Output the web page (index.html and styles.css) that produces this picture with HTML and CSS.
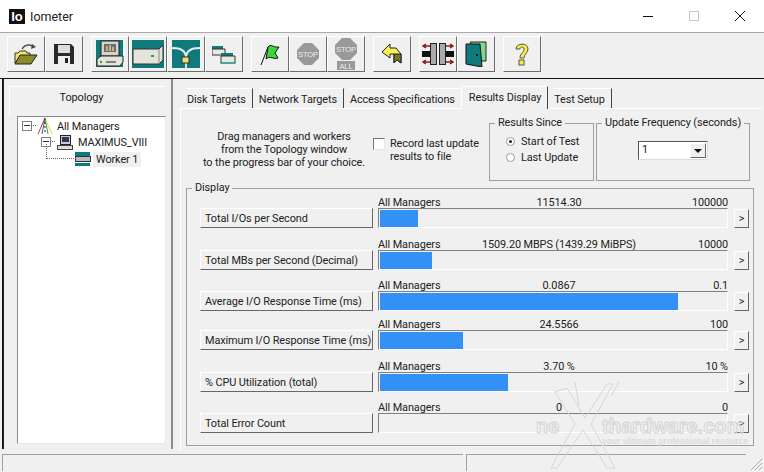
FILE: index.html
```html
<!DOCTYPE html>
<html lang="en">
<head>
    <meta charset="UTF-8">
    <title>Iometer</title>
    <link rel="stylesheet" href="styles.css">
</head>
<body>
    <header class="titlebar">
        <div class="app-logo">Io</div>
        <div class="app-name">Iometer</div>
        <div class="win-controls">
            <svg class="win-btn" width="12" height="12" viewBox="0 0 12 12"><path d="M1 6.5h10" stroke="#111" fill="none"/></svg>
            <svg class="win-btn" width="12" height="12" viewBox="0 0 12 12"><rect x="1.5" y="1.5" width="9" height="9" stroke="#c8c8c8" fill="none"/></svg>
            <svg class="win-btn" width="12" height="12" viewBox="0 0 12 12"><path d="M1 1l10 10M11 1L1 11" stroke="#111" fill="none"/></svg>
        </div>
    </header>

    <div class="toolbar">
        <div class="tool-group">
            <div class="tool"><svg width="24" height="22" viewBox="0 0 24 22"><path d="M8 6c3-5 9-5 12-2" stroke="#555" stroke-width="1.5" fill="none"/><path d="M18 1l4 3-5 2z" fill="#444"/><path d="M1 10h3l2-2h6l1 2h3v3H6L1 20z" fill="#f5e36a" stroke="#333"/><path d="M6 12h17l-6 9H1z" fill="#8b8b2a" stroke="#222"/></svg></div>
            <div class="tool"><svg width="20" height="20" viewBox="0 0 20 20"><path d="M0 0h17l3 3v17H0z" fill="#2a2a2a"/><rect x="4" y="1" width="12" height="8" fill="#ddd"/><rect x="4" y="12" width="12" height="8" fill="#eee"/><rect x="11" y="14" width="3" height="5" fill="#222"/></svg></div>
        </div>
        <div class="tool-group">
            <div class="tool"><svg width="28" height="28" viewBox="0 0 28 28"><rect width="27" height="27" fill="#0f7a7c"/><rect x="5" y="1" width="18" height="15" fill="#d8d4c4" stroke="#222"/><rect x="8" y="4" width="12" height="8" fill="#6a6a8a"/><path d="M11 11V6M14 11V5M17 11V7" stroke="#e8d050" stroke-width="1.5"/><path d="M1 19l4-3h22v6l-3 4H1z" fill="#e4e4dc" stroke="#222"/><path d="M10 22h10" stroke="#222"/><rect x="4" y="21" width="2" height="2" fill="#2a9a4a"/></svg></div>
            <div class="tool"><svg width="32" height="28" viewBox="0 0 32 28"><rect width="32" height="28" fill="#0f7a7c"/><path d="M1 9h26l4-4v15l-4 4H1z" fill="#e4e4dc" stroke="#333"/><path d="M27 9v15" stroke="#888"/><rect x="19" y="15" width="3" height="2" fill="#2a9a4a"/></svg></div>
            <div class="tool"><svg width="32" height="28" viewBox="0 0 32 28"><rect width="28" height="28" x="2" fill="#0f7a7c"/><path d="M0 8c7 0 14 0 16 8 2-8 9-8 16-8" stroke="#eee" stroke-width="2" fill="none"/><path d="M16 16v12" stroke="#ddd" stroke-width="2"/><rect x="12" y="17" width="7" height="6" fill="#f0e070" stroke="#333"/></svg></div>
            <div class="tool"><svg width="24" height="20" viewBox="0 0 24 20"><path d="M0 2h11v3H0z" fill="#0f7a7c"/><path d="M0 5h13v6H0z" fill="#e8e8e0" stroke="#333"/><path d="M9 9h12v3H9z" fill="#0f7a7c"/><path d="M9 12h14v7H9z" fill="#e8e8e0" stroke="#333"/><path d="M8 19h16" stroke="#0fb0b0"/></svg></div>
        </div>
        <div class="tool-group">
            <div class="tool"><svg width="20" height="24" viewBox="0 0 20 24"><path d="M1 23L8 5" stroke="#111" fill="none"/><path d="M8 5c3-4 5 1 11 0l-4 6 3 5c-5 2-7-3-12 1z" fill="#39d83a" stroke="#111"/></svg></div>
            <div class="tool"><svg width="22" height="22" viewBox="0 0 22 22"><path d="M7 0h8l7 7v8l-7 7H7l-7-7V7z" fill="#999"/><text class="stop-text" x="11" y="14" text-anchor="middle">STOP</text></svg></div>
            <div class="tool"><svg width="22" height="32" viewBox="0 0 22 32"><path d="M7 0h8l7 7v8l-7 7H7l-7-7V7z" fill="#999"/><text class="stop-text" x="11" y="14" text-anchor="middle">STOP</text><rect x="2" y="23" width="18" height="9" fill="#999"/><text class="stop-text" x="11" y="31" text-anchor="middle">ALL</text></svg></div>
        </div>
        <div class="tool-group">
            <div class="tool"><svg width="20" height="20" viewBox="0 0 20 20"><path d="M0 8L8 0v4h6l5 6v9l-4-3-3 3v-9H8v4z" fill="#f7ee5a" stroke="#222"/><path d="M12 10h7v9l-4-3-3 3z" fill="#75752a" stroke="#222"/></svg></div>
        </div>
        <div class="tool-group">
            <div class="tool"><svg width="32" height="24" viewBox="0 0 32 24"><path d="M0 9h9v6H0zM23 9h9v6h-9z" fill="#111"/><rect x="8.5" y="1.5" width="6" height="21" fill="#aaa" stroke="#222"/><rect x="17.5" y="1.5" width="6" height="21" fill="#aaa" stroke="#222"/><path d="M8 4H2M4 2L1 4l3 2M8 20H2M4 18l-3 2 3 2M24 4h6M28 2l3 2-3 2M24 20h6M28 18l3 2-3 2" stroke="#8a1c1c" fill="none" stroke-width="1.5"/></svg></div>
            <div class="tool"><svg width="22" height="26" viewBox="0 0 22 26"><path d="M5 1h16v19H17z" fill="#7ed98a" stroke="#222"/><path d="M1 3l14 0 2 23-16-3z" fill="#0f7a7c" stroke="#111"/><rect x="11" y="13" width="2" height="2" fill="#111"/></svg></div>
        </div>
        <div class="tool-group">
            <div class="tool"><svg width="14" height="24" viewBox="0 0 14 24"><path d="M1 7C1 1 13 0 13 7c0 4-4 5-4 9H5c0-5 4-5 4-9 0-3-4-2-4 0z" fill="#f7ee40" stroke="#555"/><rect x="4" y="18" width="5" height="5" fill="#f7ee40" stroke="#555"/></svg></div>
        </div>
    </div>

    <main class="workspace">
        <aside class="topology">
            <div class="topology-title">Topology</div>
            <div class="tree">
                <div class="tree-row">
                    <span class="expander"></span>
                    <svg class="tree-icon" width="18" height="16" viewBox="0 0 18 16"><path d="M9 0L2 16" stroke="#c33" fill="none"/><path d="M9 0l-3 16" stroke="#44b" fill="none"/><path d="M9 0l3 16" stroke="#3a3" fill="none"/><path d="M9 0l7 16" stroke="#dd4" fill="none"/><path d="M9 0v16" stroke="#222" stroke-dasharray="2 2" fill="none"/></svg>
                    <span>All Managers</span>
                </div>
                <div class="tree-row level-1">
                    <span class="expander"></span>
                    <svg class="tree-icon" width="16" height="15" viewBox="0 0 16 15"><rect x="3.5" y="0.5" width="10" height="9" fill="#ccc" stroke="#222"/><rect x="5" y="2" width="7" height="5" fill="#336"/><rect x="0.5" y="10.5" width="15" height="4" fill="#ddd" stroke="#444"/></svg>
                    <span>MAXIMUS_VIII</span>
                </div>
                <div class="tree-row level-2">
                    <svg class="tree-icon" width="16" height="14" viewBox="0 0 16 14"><rect width="15" height="4" fill="#0f7a7c"/><rect x="0.5" y="4.5" width="15" height="5" fill="#bbb" stroke="#333"/><rect y="11" width="15" height="3" fill="#0f7a7c"/></svg>
                    <span class="tree-selected">Worker 1</span>
                </div>
            </div>
        </aside>

        <section class="results">
            <nav class="tabs">
                <div class="tab">Disk Targets</div>
                <div class="tab">Network Targets</div>
                <div class="tab plain">Access Specifications</div>
                <div class="tab active">Results Display</div>
                <div class="tab">Test Setup</div>
            </nav>
            <div class="tab-panel">
                <div class="options">
                    <p class="hint">Drag managers and workers<br>from the Topology window<br>to the progress bar of your choice.</p>
                    <div class="record">
                        <span class="checkbox"></span>
                        <span>Record last update<br>results to file</span>
                    </div>
                    <fieldset class="group since">
                        <legend>Results Since</legend>
                        <div class="radio-row"><span class="radio checked"></span>Start of Test</div>
                        <div class="radio-row"><span class="radio"></span>Last Update</div>
                    </fieldset>
                    <fieldset class="group frequency">
                        <legend>Update Frequency (seconds)</legend>
                        <div class="combo">
                            <span>1</span>
                            <span class="combo-btn"></span>
                        </div>
                    </fieldset>
                </div>

                <fieldset class="group display">
                    <legend>Display</legend>
                    <div class="meter-row">
                        <div class="meter-labels"><span>All Managers</span><span class="center">11514.30</span><span class="right">100000</span></div>
                        <button class="stat-btn">Total I/Os per Second</button>
                        <div class="meter"><div class="fill" style="width: 38px"></div></div>
                        <button class="more-btn">&gt;</button>
                    </div>
                    <div class="meter-row">
                        <div class="meter-labels"><span>All Managers</span><span class="center">1509.20 MBPS (1439.29 MiBPS)</span><span class="right">10000</span></div>
                        <button class="stat-btn">Total MBs per Second (Decimal)</button>
                        <div class="meter"><div class="fill" style="width: 52px"></div></div>
                        <button class="more-btn">&gt;</button>
                    </div>
                    <div class="meter-row">
                        <div class="meter-labels"><span>All Managers</span><span class="center">0.0867</span><span class="right">0.1</span></div>
                        <button class="stat-btn">Average I/O Response Time (ms)</button>
                        <div class="meter"><div class="fill" style="width: 298px"></div></div>
                        <button class="more-btn">&gt;</button>
                    </div>
                    <div class="meter-row">
                        <div class="meter-labels"><span>All Managers</span><span class="center">24.5566</span><span class="right">100</span></div>
                        <button class="stat-btn">Maximum I/O Response Time (ms)</button>
                        <div class="meter"><div class="fill" style="width: 83px"></div></div>
                        <button class="more-btn">&gt;</button>
                    </div>
                    <div class="meter-row">
                        <div class="meter-labels"><span>All Managers</span><span class="center">3.70 %</span><span class="right">10 %</span></div>
                        <button class="stat-btn">% CPU Utilization (total)</button>
                        <div class="meter"><div class="fill" style="width: 128px"></div></div>
                        <button class="more-btn">&gt;</button>
                    </div>
                    <div class="meter-row">
                        <div class="meter-labels"><span>All Managers</span><span class="center">0</span><span class="right">0</span></div>
                        <button class="stat-btn">Total Error Count</button>
                        <div class="meter"></div>
                        <button class="more-btn">&gt;</button>
                    </div>
                </fieldset>
            </div>
        </section>
    </main>

    <footer class="statusbar">
        <div class="status-pane wide"></div>
        <div class="status-pane"></div>
        <svg class="grip" width="14" height="14" viewBox="0 0 14 14"><path d="M13 2L2 13M13 6l-7 7M13 10l-3 3" stroke="#aaa" fill="none"/></svg>
    </footer>

    <div class="watermark">
        <svg class="wm-logo" width="80" height="92" viewBox="0 0 80 92"><path d="M10 12l20 32L6 88h6l26-38 24 38h8L46 44 68 4h-6L40 38 22 8zM30 2l4 24M74 2l-8 14" fill="none" stroke="#d6d6d6"/></svg>
        <span class="wm-ne">ne</span>
        <span class="wm-host">thardware.com</span>
        <span class="wm-tag">your ultimate professional resource</span>
    </div>
</body>
</html>
```

FILE: styles.css
```css
* {
    box-sizing: border-box;
}

html, body {
    height: 100%;
}

body {
    margin: 0;
    width: 764px;
    height: 472px;
    overflow: hidden;
    position: relative;
    display: flex;
    flex-direction: column;
    background: #f0f0f0;
    color: #222;
    font-family: Roboto, 'Liberation Sans', Arial, sans-serif;
    font-size: 10.9px;
    letter-spacing: -0.1px;
}

/* title bar */
.titlebar {
    height: 33px;
    flex: none;
    display: flex;
    align-items: center;
    background: #fff;
    border-bottom: 1px solid #a8a8a8;
    padding-left: 9px;
}

.app-logo {
    width: 16px;
    height: 15px;
    background: #111;
    color: #fff;
    font-family: 'Liberation Sans', Arial, sans-serif;
    font-size: 13px;
    font-weight: 700;
    line-height: 15px;
    text-align: center;
}

.app-name {
    margin-left: 5px;
    font-size: 12.5px;
    letter-spacing: 0;
}

.win-controls {
    margin-left: auto;
    margin-right: 18px;
    display: flex;
    gap: 34px;
}

/* toolbar */
.toolbar {
    height: 46px;
    flex: none;
    display: flex;
    gap: 8px;
    padding: 3px 0 0 7px;
    border-bottom: 1px solid #111;
}

.tool-group {
    display: flex;
}

.tool {
    width: 38px;
    height: 36px;
    display: flex;
    align-items: center;
    justify-content: center;
    border: 1px solid;
    border-color: #fff #6e6e6e #6e6e6e #fff;
}

.stop-text {
    font-size: 7.5px;
    fill: #eee;
    font-family: 'Liberation Sans', Arial, sans-serif;
}

/* main area */
.workspace {
    height: 370px;
    flex: none;
    display: flex;
    margin-left: 2px;
    border-left: 1px solid #111;
}

.topology {
    width: 170px;
    flex: none;
    padding: 7px 6px 0 5px;
    border-right: 2px solid #8a8a8a;
    border-left: 1px solid #222;
}

.topology-title {
    height: 30px;
    padding: 4px 12px 0 0;
    text-align: center;
    border-top: 1px solid #fff;
    border-left: 1px solid #fff;
}

.tree {
    width: 149px;
    height: 328px;
    margin-left: 8px;
    padding-top: 1px;
    background: #fff;
    border: 1px solid;
    border-color: #8a8a8a #e8e8e8 #e8e8e8 #8a8a8a;
    position: relative;
}

/* dotted branch from the manager down to its worker */
.tree::after {
    content: "";
    position: absolute;
    left: 28px;
    top: 27px;
    width: 29px;
    height: 14px;
    border-left: 1px dotted #666;
    border-bottom: 1px dotted #666;
}

.tree-row {
    height: 16px;
    display: flex;
    align-items: center;
    gap: 3px;
    padding-left: 4px;
}

.level-1 {
    padding-left: 23px;
    gap: 5px;
}

.level-2 {
    padding-left: 57px;
    margin-top: 1px;
    gap: 2px;
}

.tree-selected {
    background: #f0f0f0;
    padding: 1px 3px;
}

.expander {
    width: 10px;
    height: 10px;
    flex: none;
    margin-right: 1px;
    border: 1px solid #808080;
    position: relative;
}

.expander::after {
    content: "";
    position: absolute;
    left: 1px;
    right: 1px;
    top: 3px;
    height: 1px;
    background: #333;
}

.expander::before {
    content: "";
    position: absolute;
    left: 100%;
    top: 3px;
    width: 5px;
    border-top: 1px dotted #666;
}

.results {
    flex: 1;
    padding: 5px 0 0 7px;
    min-width: 0;
}

.tabs {
    height: 24px;
    display: flex;
    align-items: flex-end;
    padding-left: 7px;
}

.tab {
    height: 20px;
    padding: 4px 6px 0 0;
    margin-right: 6px;
    white-space: nowrap;
    border-right: 1px solid #444;
    border-top: 1px solid #fff;
}

.tab.plain {
    border-right: 0;
    margin-right: 0;
}

.tab.active {
    height: 23px;
    padding: 4px 6px 0 7px;
    background: #f0f0f0;
    border-left: 1px solid #fff;
    position: relative;
    top: 1px;
}

.tab-panel {
    height: 342px;
    padding: 7px 0 0 5px;
    border-top: 1px solid #fff;
    border-left: 1px solid #fff;
    width: 582px;
}

.options {
    height: 65px;
    display: flex;
}

.hint {
    width: 170px;
    margin: 14px 0 0 13px;
    text-align: center;
    line-height: 13px;
}

.record {
    display: flex;
    align-items: flex-start;
    width: 116px;
    margin: 21px 0 0 4px;
    line-height: 13px;
}

.checkbox {
    width: 12px;
    height: 12px;
    flex: none;
    margin: 1px 5px 0 0;
    background: #fff;
    border: 1px solid;
    border-color: #777 #e8e8e8 #e8e8e8 #777;
}

.group {
    margin: 0;
    padding: 0;
    min-width: 0;
    border: 1px solid #a0a0a0;
}

.group legend {
    margin-left: 5px;
    padding: 0 3px;
    line-height: 14px;
}

.since {
    width: 105px;
    padding-top: 3px;
}

.frequency {
    width: 154px;
    margin-left: 2px;
}

.radio-row {
    display: flex;
    align-items: center;
    gap: 6px;
    height: 16px;
    margin-left: 16px;
}

.radio {
    width: 9px;
    height: 9px;
    background: #fff;
    border: 1px solid #999;
    border-radius: 50%;
    position: relative;
}

.radio.checked::after {
    content: "";
    position: absolute;
    left: 2px;
    top: 2px;
    width: 3px;
    height: 3px;
    background: #111;
    border-radius: 50%;
}

.combo {
    width: 70px;
    height: 19px;
    margin: 11px 0 0 41px;
    display: flex;
    justify-content: space-between;
    padding: 1px 1px 1px 3px;
    background: #fff;
    border: 1px solid;
    border-color: #555 #ddd #ddd #555;
}

.combo-btn {
    width: 16px;
    background: #f0f0f0;
    border: 1px solid;
    border-color: #fff #666 #666 #fff;
    position: relative;
}

.combo-btn::after {
    content: "";
    position: absolute;
    left: 3px;
    top: 5px;
    border: 4px solid transparent;
    border-top-color: #111;
    border-bottom: 0;
}

.display {
    width: 568px;
    height: 265px;
}

.meter-row {
    display: grid;
    grid-template-columns: 173px 350px 15px;
    grid-template-rows: 14px 20px;
    column-gap: 5px;
    margin: 0 0 8px 13px;
}

.meter-row:nth-of-type(2) {
    margin-bottom: 7px;
}

.meter-row:nth-of-type(3) {
    margin-bottom: 5px;
}

.meter-row:nth-of-type(5) {
    margin-bottom: 7px;
}

.meter-row:first-of-type {
    margin-top: -1px;
}

.meter-labels {
    grid-column: 2 / 4;
    display: grid;
    grid-template-columns: 102px 158px 90px;
    white-space: nowrap;
    height: 14px;
    line-height: 18px;
}

.center {
    text-align: center;
}

.right {
    text-align: right;
}

.stat-btn {
    grid-column: 1;
    grid-row: 2;
    height: 20px;
    padding: 0 0 0 4px;
    text-align: left;
    font: inherit;
    letter-spacing: inherit;
    color: inherit;
    white-space: nowrap;
    background: #f0f0f0;
    border: 1px solid;
    border-color: #fff #666 #666 #fff;
}

.meter {
    padding: 1px 0 1px 1px;
    height: 20px;
    border-top: 1px solid #808080;
    border-left: 1px solid #808080;
    border-bottom: 1px solid #fff;
    border-right: 1px solid #fff;
}

.fill {
    height: 17px;
    background: #3390f5;
}

.more-btn {
    height: 19px;
    width: 15px;
    margin: 1px 0 0 1px;
    padding: 0;
    font: inherit;
    color: inherit;
    background: #f0f0f0;
    border: 1px solid;
    border-color: #fff #666 #666 #fff;
}

/* status bar */
.statusbar {
    height: 17px;
    margin-top: 5px;
    flex: none;
    display: flex;
    gap: 3px;
    padding-left: 2px;
    position: relative;
}

.status-pane {
    width: 280px;
    border-top: 1px solid #a0a0a0;
    border-left: 1px solid #a0a0a0;
}

.status-pane.wide {
    width: 461px;
}

.grip {
    position: absolute;
    right: 1px;
    bottom: 0;
}

/* site watermark over the picture */
.watermark {
    position: absolute;
    left: 530px;
    top: 378px;
    width: 234px;
    height: 94px;
    overflow: hidden;
    pointer-events: none;
    font-family: 'Liberation Sans', Arial, sans-serif;
    letter-spacing: 0;
    white-space: nowrap;
}

.wm-logo {
    position: absolute;
    left: 15px;
    top: 2px;
}

.wm-ne, .wm-host {
    position: absolute;
    top: 37px;
    font-size: 20px;
    line-height: 22px;
    font-weight: 700;
    color: transparent;
    -webkit-text-stroke: 1px #d4d4d4;
}

.wm-ne {
    left: 6px;
}

.wm-host {
    left: 72px;
}

.wm-tag {
    position: absolute;
    left: 72px;
    top: 58px;
    font-size: 8.6px;
    font-weight: 700;
    color: #dcdcdc;
}
```
